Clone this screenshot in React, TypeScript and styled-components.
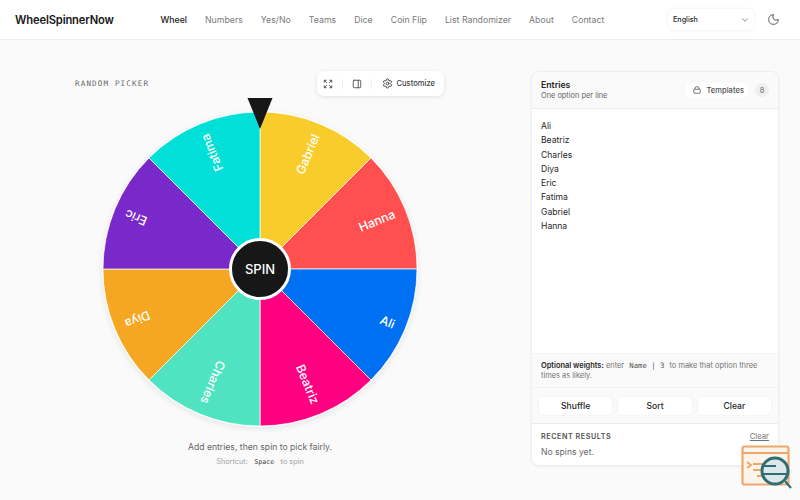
import * as React from 'react';
import styled, { createGlobalStyle } from 'styled-components';
import { ChevronDown, Expand, Moon, PanelRight, Settings } from 'lucide-react';

const GlobalStyle = createGlobalStyle`
  html, body {
    margin: 0;
    padding: 0;
    background: #fafafa;
    font-family: 'Inter', 'Liberation Sans', sans-serif;
    color: #171717;
  }
  * { box-sizing: border-box; }
`;

const Page = styled.div`
  position: relative;
  width: 800px;
  height: 500px;
  overflow: hidden;
  background: #fafafa;
`;

const Header = styled.header`
  height: 40px;
  background: #fff;
  border-bottom: 1px solid #ececec;
  display: flex;
  align-items: center;
  padding: 0 20px 0 15px;
`;

const Logo = styled.div`
  width: 145.5px;
  font-size: 11.2px;
  font-weight: 600;
  letter-spacing: -0.15px;
`;

const Nav = styled.nav`
  display: flex;
  gap: 18px;
  flex: 1;
`;

const NavLink = styled.a<{ $active?: boolean }>`
  font-size: 8.75px;
  font-weight: ${(p) => (p.$active ? 500 : 400)};
  color: ${(p) => (p.$active ? '#171717' : '#7a7a7a')};
`;

const LangSelect = styled.div`
  width: 86px;
  height: 21px;
  border-radius: 5px;
  background: #fff;
  box-shadow: 0 0 3px rgba(0, 0, 0, 0.1);
  display: flex;
  align-items: center;
  justify-content: space-between;
  padding: 0 4px 0 5px;
  font-size: 7.2px;
  font-weight: 500;
  color: #262626;
  margin-right: 13px;
  svg { color: #777; }
`;

const ThemeToggle = styled.div`
  display: flex;
  color: #777;
`;

const Main = styled.main`
  display: flex;
  gap: 86px;
  padding: 31px 21px 0 75px;
`;

const WheelColumn = styled.section`
  width: 370px;
  display: flex;
  flex-direction: column;
  align-items: center;
`;

const WheelHeader = styled.div`
  width: 100%;
  height: 25px;
  display: flex;
  align-items: center;
  justify-content: space-between;
`;

const Eyebrow = styled.div`
  font-family: 'DejaVu Sans Mono', 'Liberation Mono', monospace;
  font-size: 7.6px;
  letter-spacing: 1.13px;
  color: #666;
`;

const Toolbar = styled.div`
  height: 25px;
  margin-right: 1px;
  display: flex;
  align-items: center;
  gap: 7px;
  background: #fff;
  border-radius: 7px;
  box-shadow: 0 1px 4px rgba(0, 0, 0, 0.1);
  padding: 0 9px 0 4px;
  color: #444;
`;

const ToolIcon = styled.div`
  display: flex;
  width: 14px;
  justify-content: center;
`;

const ToolDivider = styled.div`
  width: 1px;
  height: 10px;
  background: #f0f0f0;
`;

const ToolLabel = styled.div`
  display: flex;
  align-items: center;
  gap: 3.5px;
  margin-left: 3px;
  font-size: 7.6px;
  font-weight: 500;
  color: #404040;
`;

const WheelSvg = styled.svg`
  display: block;
  margin-top: 8px;
  overflow: visible;
`;

const Hint = styled.p`
  margin: 5px 0 0;
  font-size: 8.65px;
  line-height: 12px;
  color: #666;
`;

const Shortcut = styled.div`
  display: flex;
  align-items: center;
  gap: 6.5px;
  margin-top: 4px;
  font-size: 7.3px;
  color: #a3a3a3;
`;

const Key = styled.span`
  font-family: 'DejaVu Sans Mono', 'Liberation Mono', monospace;
  font-size: 6.6px;
  color: #404040;
`;

const Panel = styled.aside`
  width: 248px;
  height: 395px;
  border-radius: 8px;
  background: #fff;
  border: 1px solid #eeeeee;
  box-shadow: 0 1px 3px rgba(0, 0, 0, 0.05);
  display: flex;
  flex-direction: column;
  overflow: hidden;
`;

const PanelHead = styled.div`
  height: 37px;
  flex: none;
  background: #fafafa;
  border-bottom: 1px solid #ececec;
  display: flex;
  align-items: center;
  justify-content: space-between;
  padding: 0 9px;
`;

const PanelTitle = styled.div`
  font-size: 8.7px;
  font-weight: 600;
  color: #262626;
  line-height: 12px;
`;

const PanelSub = styled.div`
  font-size: 7.4px;
  color: #666;
  line-height: 10px;
`;

const HeadActions = styled.div`
  display: flex;
  align-items: center;
  gap: 7px;
`;

const TemplatesButton = styled.div`
  display: flex;
  align-items: center;
  gap: 5px;
  height: 15px;
  padding: 0 4px 0 7px;
  background: #fff;
  border-radius: 5px;
  font-size: 7.6px;
  font-weight: 500;
  color: #525252;
`;

const BagIcon = styled.svg`
  display: block;
  color: #555;
`;

const CountBadge = styled.div`
  width: 14px;
  height: 14px;
  border-radius: 50%;
  background: #efefef;
  font-size: 7.4px;
  color: #666;
  display: flex;
  align-items: center;
  justify-content: center;
`;

const EntryList = styled.div`
  flex: 1;
  padding: 10px 9px 0;
  font-size: 8.6px;
  line-height: 14.3px;
  color: #262626;
`;

const WeightNote = styled.div`
  height: 34px;
  flex: none;
  background: #fafafa;
  border-top: 1px solid #f2f2f2;
  padding: 7px 9px 0;
  font-size: 7.45px;
  line-height: 10px;
  color: #737373;
  white-space: nowrap;
  b { font-weight: 600; color: #262626; }
  code {
    font-family: 'DejaVu Sans Mono', 'Liberation Mono', monospace;
    font-size: 7.3px;
    color: #525252;
    margin: 0 3px;
    white-space: pre;
  }
`;

const ActionRow = styled.div`
  height: 36px;
  flex: none;
  background: #fafafa;
  border-top: 1px solid #f2f2f2;
  display: grid;
  grid-template-columns: repeat(3, 1fr);
  gap: 6px;
  padding: 9px 7px 8px;
`;

const ActionButton = styled.div`
  background: #fff;
  border-radius: 4px;
  box-shadow: 0 0 2px rgba(0, 0, 0, 0.08);
  font-size: 8.6px;
  font-weight: 500;
  color: #262626;
  display: flex;
  align-items: center;
  justify-content: center;
`;

const Recent = styled.div`
  flex: none;
  height: 42px;
  border-top: 1px solid #ececec;
  padding: 8px 9px 0;
`;

const RecentHead = styled.div`
  display: flex;
  justify-content: space-between;
  align-items: center;
  font-size: 7.2px;
  font-weight: 600;
  letter-spacing: 0.55px;
  color: #525252;
`;

const ClearLink = styled.a`
  font-size: 7.7px;
  font-weight: 400;
  letter-spacing: 0;
  color: #737373;
  text-decoration: underline;
`;

const EmptyResults = styled.div`
  margin-top: 6px;
  font-size: 8.6px;
  color: #666;
`;

const Watermark = styled.svg`
  position: absolute;
  left: 741px;
  top: 445px;
`;

const NAV = ['Numbers', 'Yes/No', 'Teams', 'Dice', 'Coin Flip', 'List Randomizer', 'About', 'Contact'];
const SLICES = [
  { name: 'Gabriel', color: '#f8cd2b' },
  { name: 'Hanna', color: '#ff4f4f' },
  { name: 'Ali', color: '#0070f3' },
  { name: 'Beatriz', color: '#ff0080' },
  { name: 'Charles', color: '#50e3c2' },
  { name: 'Diya', color: '#f5a623' },
  { name: 'Eric', color: '#7928ca' },
  { name: 'Fatima', color: '#00dfd8' },
];
const ENTRIES = ['Ali', 'Beatriz', 'Charles', 'Diya', 'Eric', 'Fatima', 'Gabriel', 'Hanna'];

const CX = 170;
const CY = 165;
const R = 157;

function polar(deg: number, r: number) {
  const a = ((deg - 90) * Math.PI) / 180;
  return [CX + r * Math.cos(a), CY + r * Math.sin(a)];
}

function Wheel() {
  return (
    <WheelSvg width="340" height="332" viewBox="0 0 340 332">
      <circle cx={CX} cy={CY + 2} r={R + 1} fill="#000" opacity="0.08" style={{ filter: 'blur(3px)' }} />
      <circle cx={CX} cy={CY} r={R + 1} fill="#fff" />
      {SLICES.map((s, i) => {
        const [x1, y1] = polar(i * 45, R);
        const [x2, y2] = polar((i + 1) * 45, R);
        const mid = i * 45 + 22.5;
        return (
          <g key={s.name}>
            <path
              d={`M${CX} ${CY}L${x1} ${y1}A${R} ${R} 0 0 1 ${x2} ${y2}Z`}
              fill={s.color}
              stroke="#fff"
              strokeOpacity="0.7"
              strokeWidth="1"
            />
            <text
              transform={`rotate(${mid - 90} ${CX} ${CY})`}
              x={CX + 145.5}
              y={CY + 4.5}
              textAnchor="end"
              fontFamily="Inter, sans-serif"
              fontSize="12.3"
              fontWeight="500"
              fill="#fff"
            >
              {s.name}
            </text>
          </g>
        );
      })}
      <circle cx={CX} cy={CY} r="29.5" fill="#171717" stroke="#fff" strokeWidth="3" />
      <text x={CX} y={CY + 5} textAnchor="middle" fontFamily="Inter, sans-serif" fontSize="13" fontWeight="500" fill="#fff">
        SPIN
      </text>
      <polygon points={`${CX - 12.5},-6 ${CX + 12.5},-6 ${CX},25`} fill="#171717" />
    </WheelSvg>
  );
}

export default function App() {
  return (
    <Page>
      <GlobalStyle />
      <Header>
        <Logo>WheelSpinnerNow</Logo>
        <Nav>
          <NavLink $active>Wheel</NavLink>
          {NAV.map((n) => (
            <NavLink key={n}>{n}</NavLink>
          ))}
        </Nav>
        <LangSelect>
          English
          <ChevronDown size={10} />
        </LangSelect>
        <ThemeToggle>
          <Moon size={13} />
        </ThemeToggle>
      </Header>
      <Main>
        <WheelColumn>
          <WheelHeader>
            <Eyebrow>RANDOM PICKER</Eyebrow>
            <Toolbar>
              <ToolIcon>
                <Expand size={10} />
              </ToolIcon>
              <ToolDivider />
              <ToolIcon>
                <PanelRight size={10} />
              </ToolIcon>
              <ToolDivider />
              <ToolLabel>
                <Settings size={11} />
                Customize
              </ToolLabel>
            </Toolbar>
          </WheelHeader>
          <Wheel />
          <Hint>Add entries, then spin to pick fairly.</Hint>
          <Shortcut>
            Shortcut:
            <Key>Space</Key>
            to spin
          </Shortcut>
        </WheelColumn>
        <Panel>
          <PanelHead>
            <div>
              <PanelTitle>Entries</PanelTitle>
              <PanelSub>One option per line</PanelSub>
            </div>
            <HeadActions>
              <TemplatesButton>
                <BagIcon width="8" height="8" viewBox="0 0 16 16" fill="none" stroke="currentColor" strokeWidth="1.6">
                  <rect x="1.5" y="6.5" width="13" height="8" rx="1.5" />
                  <path d="M4 6.5V4.5a4 3.2 0 0 1 8 0v2" />
                </BagIcon>
                Templates
              </TemplatesButton>
              <CountBadge>8</CountBadge>
            </HeadActions>
          </PanelHead>
          <EntryList>
            {ENTRIES.map((e) => (
              <div key={e}>{e}</div>
            ))}
          </EntryList>
          <WeightNote>
            <div>
              <b>Optional weights:</b> enter <code>Name | 3</code> to make that option three
            </div>
            <div>times as likely.</div>
          </WeightNote>
          <ActionRow>
            <ActionButton>Shuffle</ActionButton>
            <ActionButton>Sort</ActionButton>
            <ActionButton>Clear</ActionButton>
          </ActionRow>
          <Recent>
            <RecentHead>
              RECENT RESULTS
              <ClearLink>Clear</ClearLink>
            </RecentHead>
            <EmptyResults>No spins yet.</EmptyResults>
          </Recent>
        </Panel>
      </Main>
      <Watermark width="54" height="46" viewBox="0 0 54 46">
        <rect x="1.5" y="1.5" width="46" height="38" rx="2" fill="#fcf3ea" stroke="#eea86c" strokeWidth="2.2" />
        <path d="M1.5 8H47.5" stroke="#eea86c" strokeWidth="2" />
        <path d="M4.5 4.8h1.5M8 4.8h1.5M11.5 4.8h1.5" stroke="#fff" strokeWidth="1.2" />
        <path d="M6 17l4 3-4 3M12 19h10M12 25h12M16 31h10" fill="none" stroke="#eea86c" strokeWidth="2" />
        <circle cx="34" cy="26" r="13" fill="#dce8ea" stroke="#2f6f73" strokeWidth="3" />
        <path d="M23 21h12M21 29h26M44 36l6 7" fill="none" stroke="#2f6f73" strokeWidth="2.2" />
      </Watermark>
    </Page>
  );
}
